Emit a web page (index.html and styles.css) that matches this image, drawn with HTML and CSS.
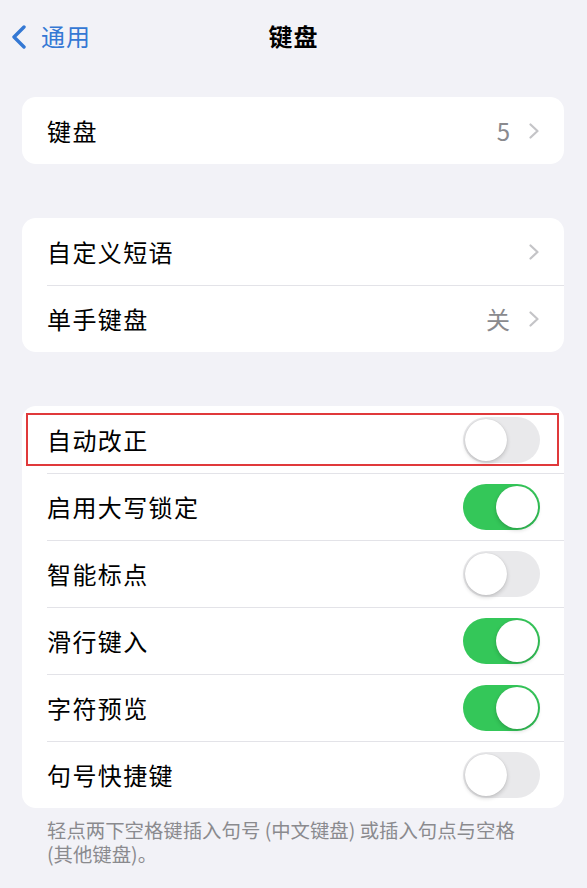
FILE: index.html
```html
<!DOCTYPE html>
<html lang="zh">
<head>
<meta charset="utf-8">
<link rel="stylesheet" href="styles.css">
</head>
<body>
<div class="nav">
  <div class="back">
    <svg class="back-icon" width="16" height="24" viewBox="0 0 16 24"><polyline points="13,2 3,12 13,22" fill="none" stroke="#3478d4" stroke-width="3.4" stroke-linecap="round" stroke-linejoin="round"/></svg>
    <span class="back-text">通用</span>
  </div>
  <div class="title">键盘</div>
</div>

<div class="card card-first">
  <div class="row"><span class="label">键盘</span><span class="value">5</span><svg class="chev" width="12" height="16" viewBox="0 0 12 16"><polyline points="2.5,1.5 9.5,8 2.5,14.5" fill="none" stroke="#c4c4c7" stroke-width="2.2" stroke-linecap="round" stroke-linejoin="round"/></svg></div>
</div>

<div class="card">
  <div class="row"><span class="label">自定义短语</span><svg class="chev" width="12" height="16" viewBox="0 0 12 16"><polyline points="2.5,1.5 9.5,8 2.5,14.5" fill="none" stroke="#c4c4c7" stroke-width="2.2" stroke-linecap="round" stroke-linejoin="round"/></svg></div>
  <div class="row"><span class="label">单手键盘</span><span class="value">关</span><svg class="chev" width="12" height="16" viewBox="0 0 12 16"><polyline points="2.5,1.5 9.5,8 2.5,14.5" fill="none" stroke="#c4c4c7" stroke-width="2.2" stroke-linecap="round" stroke-linejoin="round"/></svg></div>
</div>

<div class="card card-last">
  <div class="row"><span class="label">自动改正</span><span class="toggle"><span class="knob"></span></span><span class="redbox"></span></div>
  <div class="row"><span class="label">启用大写锁定</span><span class="toggle on"><span class="knob"></span></span></div>
  <div class="row"><span class="label">智能标点</span><span class="toggle"><span class="knob"></span></span></div>
  <div class="row"><span class="label">滑行键入</span><span class="toggle on"><span class="knob"></span></span></div>
  <div class="row"><span class="label">字符预览</span><span class="toggle on"><span class="knob"></span></span></div>
  <div class="row"><span class="label">句号快捷键</span><span class="toggle"><span class="knob"></span></span></div>
</div>
<div class="footer">轻点两下空格键插入句号 (中文键盘) 或插入句点与空格 (其他键盘)。</div>
</body>
</html>
```

FILE: styles.css
```css
html, body {
  margin: 0;
  padding: 0;
  background: #f2f2f7;
  font-family: "Noto Sans CJK SC", "Noto Sans", sans-serif;
  color: #000;
}
.nav {
  position: relative;
  height: 70px;
  padding-bottom: 4px;
  display: flex;
  align-items: center;
  justify-content: center;
}
.back {
  position: absolute;
  left: 11px;
  top: 0;
  height: 74px;
  display: flex;
  align-items: center;
  gap: 14px;
}
.back-icon {
  display: block;
}
.back-text {
  font-size: 24px;
  color: #3478d4;
  letter-spacing: 1px;
  margin-top: -3px;
}
.title {
  font-size: 24px;
  font-weight: 700;
  letter-spacing: 1px;
}
.card {
  background: #fff;
  margin: 0 23px 54px 22px;
  border-radius: 14px;
}
.card-first {
  margin-top: 23px;
}
.card-last {
  margin-bottom: 0;
}
.row {
  position: relative;
  height: 67px;
  display: flex;
  align-items: center;
  padding: 0 24px 0 25px;
}
.row + .row::before {
  content: "";
  position: absolute;
  left: 25px;
  right: 0;
  top: 0;
  height: 1px;
  background: #e3e3e8;
}
.label {
  flex: 1;
  font-size: 24px;
  letter-spacing: 1.4px;
}
.value {
  font-size: 24px;
  color: #8a8a8e;
  margin-right: 18px;
}
.chev {
  display: block;
}
.toggle {
  position: relative;
  width: 77px;
  height: 46px;
  border-radius: 23px;
  background: #e9e9eb;
  display: block;
}
.toggle .knob {
  position: absolute;
  top: 2px;
  left: 2px;
  width: 42px;
  height: 42px;
  border-radius: 50%;
  background: #fff;
  box-shadow: 0 2px 4px rgba(0,0,0,0.18), 0 0 1px rgba(0,0,0,0.15);
}
.toggle.on {
  background: #34c759;
}
.toggle.on .knob {
  left: auto;
  right: 2px;
}
.redbox {
  position: absolute;
  left: 4px;
  top: 7px;
  width: 529px;
  height: 49px;
  border: 2px solid #e0393b;
  pointer-events: none;
}
.footer {
  margin: 10px 50px 0 47px;
  font-size: 19.4px;
  line-height: 24px;
  color: #8a8a8e;
}
```
